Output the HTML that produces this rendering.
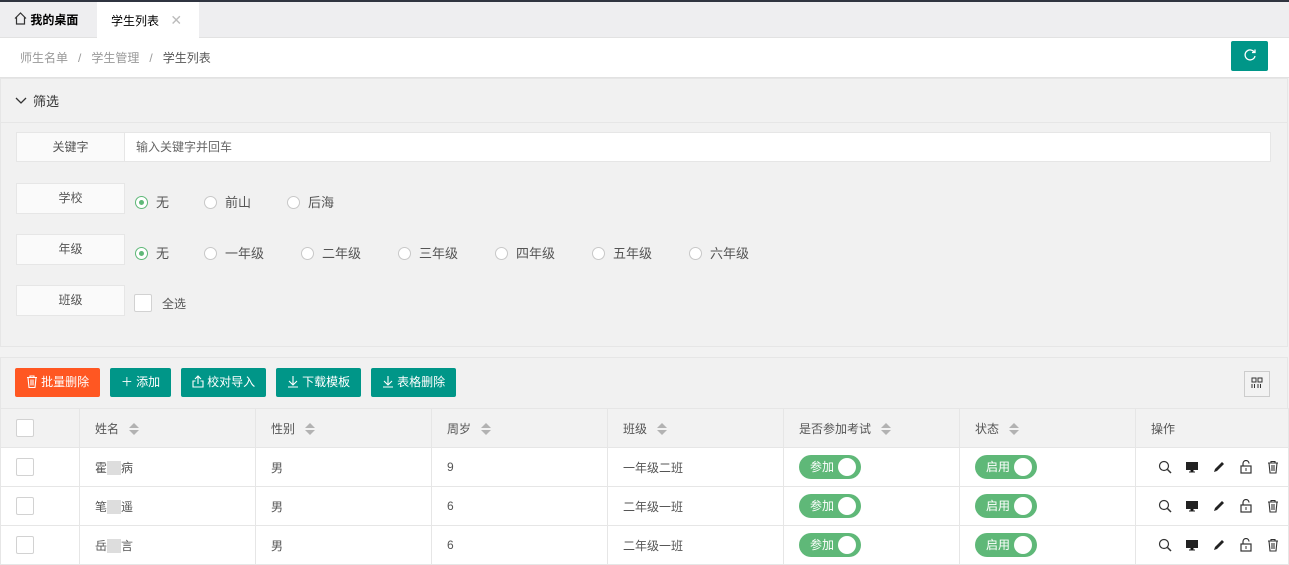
<!DOCTYPE html>
<html><head><meta charset="utf-8"><style>
*{box-sizing:border-box;margin:0;padding:0}
body{width:1289px;height:563px;overflow:hidden;background:#f2f2f2;font-family:"Liberation Sans","Noto Sans CJK SC",sans-serif;font-size:13px;color:#333;position:relative}
.abs{position:absolute}
.topbar{left:0;top:0;width:1289px;height:2px;background:#2f3440}
.tabs{left:0;top:2px;width:1289px;height:36px;background:#eeeef0;border-bottom:1px solid #e2e2e2}
.tab{top:2px;height:36px;line-height:36px;font-size:12px;color:#000}
.crumb{left:0;top:38px;width:1289px;height:40px;background:#fff;border-bottom:1px solid #e2e2e2;font-size:12px;line-height:40px;padding-left:20px;color:#999}
.btn{height:29px;line-height:29px;color:#fff;background:#009688;border-radius:2px;font-size:12px;text-align:center}
.panel{background:#f1f1f1;border:1px solid #e6e6e6}
.lab{left:16px;width:109px;height:31px;background:#fafafa;border:1px solid #e6e6e6;text-align:center;line-height:29px;font-size:12px;color:#555}
.opt{font-size:13px;color:#555;line-height:16px}
.rad{display:inline-block;width:13px;height:13px;border:1px solid #c8c8c8;border-radius:50%;vertical-align:-2px;margin-right:8px;background:#fff;position:relative}
.rad.on{border-color:#5fb878}
.rad.on:after{content:"";position:absolute;left:3px;top:3px;width:5px;height:5px;border-radius:50%;background:#5fb878}
table{position:absolute;left:0;top:408px;width:1289px;border-collapse:collapse;background:#fff;font-size:12px;color:#555;table-layout:fixed}
td,th{border:1px solid #e6e6e6;height:39px;text-align:left;padding-left:15px;font-weight:normal;white-space:nowrap}
th{background:#f2f2f2}
.cb{display:inline-block;width:18px;height:18px;border:1px solid #d2d2d2;border-radius:2px;background:#fff;vertical-align:middle}
.sort{display:inline-block;vertical-align:middle;margin-left:10px;width:10px;height:12px;position:relative}
.sort:before{content:"";position:absolute;left:0;top:0;border:5px solid transparent;border-top:0;border-bottom:5px solid #b2b2b2}
.sort:after{content:"";position:absolute;left:0;top:7px;border:5px solid transparent;border-bottom:0;border-top:5px solid #b2b2b2}
.sw{display:inline-block;width:62px;height:24px;border-radius:12px;background:#5fb878;color:#fff;font-size:12px;line-height:24px;padding-left:11px;position:relative;vertical-align:middle}
.sw:after{content:"";position:absolute;right:5px;top:3px;width:18px;height:18px;border-radius:50%;background:#fff}
.ops{display:flex;align-items:center;gap:13px;padding-left:0}
.blur{display:inline-block;width:14px;height:14px;background:#ddd;vertical-align:middle}
</style></head><body>
<div class="abs topbar"></div>
<div class="abs tabs"></div>
<div class="abs tab" style="left:14px;font-weight:bold"><svg width="13" height="13" viewBox="0 0 13 13" style="vertical-align:-1px"><path d="M1 6.5L6.5 1 12 6.5M2.5 5v7h8V5" fill="none" stroke="#333" stroke-width="1.2"/></svg> 我的桌面</div>
<div class="abs tab" style="left:97px;width:102px;background:#fff;padding-left:14px;height:36px">学生列表 <span style="color:#bbb;margin-left:8px;font-size:14px">✕</span></div>
<div class="abs crumb">师生名单 &nbsp; / &nbsp; 学生管理 &nbsp; / &nbsp; <span style="color:#555">学生列表</span></div>
<div class="abs btn" style="left:1231px;top:41px;width:37px;height:30px;line-height:30px"><svg width="14" height="14" viewBox="0 0 14 14" style="vertical-align:-2px"><path d="M11.5 4.5A5 5 0 1 0 12 8" fill="none" stroke="#fff" stroke-width="1.3"/><path d="M9 4.5h3v-3" fill="none" stroke="#fff" stroke-width="1.3"/></svg></div>

<div class="abs panel" style="left:0;top:78px;width:1288px;height:269px"></div>
<div class="abs" style="left:0;top:122px;width:1288px;height:1px;background:#e6e6e6"></div>
<div class="abs" style="left:15px;top:91px;font-size:13px;color:#333"><svg width="12" height="10" viewBox="0 0 12 10" style="margin-right:6px"><path d="M1 2l5 5 5-5" fill="none" stroke="#333" stroke-width="1.3"/></svg>筛选</div>
<div class="abs lab" style="top:132px;height:30px">关键字</div>
<div class="abs" style="left:124px;top:132px;width:1147px;height:30px;background:#fff;border:1px solid #e6e6e6;border-left:1px solid #e6e6e6;line-height:28px;padding-left:11px;font-size:12px;color:#666">输入关键字并回车</div>
<div class="abs lab" style="top:183px">学校</div>
<div class="abs lab" style="top:234px">年级</div>
<div class="abs lab" style="top:285px">班级</div>
<div class="abs opt" style="left:135px;top:195px"><span class="rad on"></span>无</div>
<div class="abs opt" style="left:204px;top:195px"><span class="rad"></span>前山</div>
<div class="abs opt" style="left:287px;top:195px"><span class="rad"></span>后海</div>
<div class="abs opt" style="left:135px;top:246px"><span class="rad on"></span>无</div>
<div class="abs opt" style="left:204px;top:246px"><span class="rad"></span>一年级</div>
<div class="abs opt" style="left:301px;top:246px"><span class="rad"></span>二年级</div>
<div class="abs opt" style="left:398px;top:246px"><span class="rad"></span>三年级</div>
<div class="abs opt" style="left:495px;top:246px"><span class="rad"></span>四年级</div>
<div class="abs opt" style="left:592px;top:246px"><span class="rad"></span>五年级</div>
<div class="abs opt" style="left:689px;top:246px"><span class="rad"></span>六年级</div>
<div class="abs" style="left:134px;top:294px;width:18px;height:18px;background:#fff;border:1px solid #d2d2d2;border-radius:2px"></div>
<div class="abs opt" style="left:162px;top:296px;font-size:12px">全选</div>

<div class="abs panel" style="left:0;top:357px;width:1288px;height:52px"></div>
<div class="abs btn" style="left:15px;top:368px;width:85px;background:#ff5722"><svg width="12" height="13" viewBox="0 0 12 13" style="vertical-align:-2px"><path d="M1 2.5h10M4 2.5V1h4v1.5M2 2.5l1 10h6l1-10M5 4.5v6M7 4.5v6" fill="none" stroke="#fff" stroke-width="1.1"/></svg> 批量删除</div>
<div class="abs btn" style="left:110px;top:368px;width:61px">＋ 添加</div>
<div class="abs btn" style="left:181px;top:368px;width:85px"><svg width="12" height="13" viewBox="0 0 12 13" style="vertical-align:-2px"><path d="M6 9V1M3 4l3-3 3 3M3.5 6H1v6h10V6H8.5" fill="none" stroke="#fff" stroke-width="1.1"/></svg> 校对导入</div>
<div class="abs btn" style="left:276px;top:368px;width:85px"><svg width="12" height="13" viewBox="0 0 12 13" style="vertical-align:-2px"><path d="M6 1v9M2 6l4 4 4-4M1 12h10" fill="none" stroke="#fff" stroke-width="1.1"/></svg> 下载模板</div>
<div class="abs btn" style="left:371px;top:368px;width:85px"><svg width="12" height="13" viewBox="0 0 12 13" style="vertical-align:-2px"><path d="M6 1v9M2 6l4 4 4-4M1 12h10" fill="none" stroke="#fff" stroke-width="1.1"/></svg> 表格删除</div>
<div class="abs" style="left:1244px;top:371px;width:26px;height:26px;border:1px solid #ccc;background:#f2f2f2;text-align:center;line-height:24px"><svg width="12" height="12" viewBox="0 0 12 12" style="vertical-align:-1px"><path d="M1 1h4v4H1zM7 1h4v4H7zM1 7v4M3.5 7v4M7 7v4M9.5 7v4" fill="none" stroke="#333" stroke-width="1"/></svg></div>

<table>
<colgroup><col style="width:79px"><col style="width:176px"><col style="width:176px"><col style="width:176px"><col style="width:176px"><col style="width:176px"><col style="width:176px"><col></colgroup>
<tr><th><span class="cb"></span></th><th>姓名<span class="sort"></span></th><th>性别<span class="sort"></span></th><th>周岁<span class="sort"></span></th><th>班级<span class="sort"></span></th><th>是否参加考试<span class="sort"></span></th><th>状态<span class="sort"></span></th><th>操作</th></tr>
<tr><td><span class="cb"></span></td><td>霍<span class="blur"></span>病</td><td>男</td><td>9</td><td>一年级二班</td><td><span class="sw">参加</span></td><td><span class="sw">启用</span></td><td><div class="ops" style="margin-left:7px">
<svg width="14" height="14" viewBox="0 0 14 14"><circle cx="6" cy="6" r="4.5" fill="none" stroke="#333" stroke-width="1.2"/><path d="M9.5 9.5l3.5 3.5" stroke="#333" stroke-width="1.5"/></svg>
<svg width="14" height="14" viewBox="0 0 14 14"><rect x="1" y="2" width="12" height="8" fill="#222"/><path d="M6 10v2h2v-2M4 12h6" stroke="#222"/></svg>
<svg width="14" height="14" viewBox="0 0 14 14"><path d="M2 12l1-3 7-7 2 2-7 7z" fill="#222"/></svg>
<svg width="14" height="14" viewBox="0 0 14 14"><rect x="2" y="6" width="10" height="7" fill="none" stroke="#333" stroke-width="1.2"/><path d="M4 6V3.5a3 3 0 0 1 6 0" fill="none" stroke="#333" stroke-width="1.2"/><path d="M7 8v3" stroke="#333"/></svg>
<svg width="14" height="14" viewBox="0 0 14 14"><path d="M2 3h10M5 3V1.5h4V3M3 3l1 10h6l1-10M6 5v6M8 5v6" fill="none" stroke="#333" stroke-width="1.1"/></svg></div></td></tr>
<tr><td><span class="cb"></span></td><td>笔<span class="blur"></span>遥</td><td>男</td><td>6</td><td>二年级一班</td><td><span class="sw">参加</span></td><td><span class="sw">启用</span></td><td><div class="ops" style="margin-left:7px">
<svg width="14" height="14" viewBox="0 0 14 14"><circle cx="6" cy="6" r="4.5" fill="none" stroke="#333" stroke-width="1.2"/><path d="M9.5 9.5l3.5 3.5" stroke="#333" stroke-width="1.5"/></svg>
<svg width="14" height="14" viewBox="0 0 14 14"><rect x="1" y="2" width="12" height="8" fill="#222"/><path d="M6 10v2h2v-2M4 12h6" stroke="#222"/></svg>
<svg width="14" height="14" viewBox="0 0 14 14"><path d="M2 12l1-3 7-7 2 2-7 7z" fill="#222"/></svg>
<svg width="14" height="14" viewBox="0 0 14 14"><rect x="2" y="6" width="10" height="7" fill="none" stroke="#333" stroke-width="1.2"/><path d="M4 6V3.5a3 3 0 0 1 6 0" fill="none" stroke="#333" stroke-width="1.2"/><path d="M7 8v3" stroke="#333"/></svg>
<svg width="14" height="14" viewBox="0 0 14 14"><path d="M2 3h10M5 3V1.5h4V3M3 3l1 10h6l1-10M6 5v6M8 5v6" fill="none" stroke="#333" stroke-width="1.1"/></svg></div></td></tr>
<tr><td><span class="cb"></span></td><td>岳<span class="blur"></span>言</td><td>男</td><td>6</td><td>二年级一班</td><td><span class="sw">参加</span></td><td><span class="sw">启用</span></td><td><div class="ops" style="margin-left:7px">
<svg width="14" height="14" viewBox="0 0 14 14"><circle cx="6" cy="6" r="4.5" fill="none" stroke="#333" stroke-width="1.2"/><path d="M9.5 9.5l3.5 3.5" stroke="#333" stroke-width="1.5"/></svg>
<svg width="14" height="14" viewBox="0 0 14 14"><rect x="1" y="2" width="12" height="8" fill="#222"/><path d="M6 10v2h2v-2M4 12h6" stroke="#222"/></svg>
<svg width="14" height="14" viewBox="0 0 14 14"><path d="M2 12l1-3 7-7 2 2-7 7z" fill="#222"/></svg>
<svg width="14" height="14" viewBox="0 0 14 14"><rect x="2" y="6" width="10" height="7" fill="none" stroke="#333" stroke-width="1.2"/><path d="M4 6V3.5a3 3 0 0 1 6 0" fill="none" stroke="#333" stroke-width="1.2"/><path d="M7 8v3" stroke="#333"/></svg>
<svg width="14" height="14" viewBox="0 0 14 14"><path d="M2 3h10M5 3V1.5h4V3M3 3l1 10h6l1-10M6 5v6M8 5v6" fill="none" stroke="#333" stroke-width="1.1"/></svg></div></td></tr>
</table>
</body></html>
